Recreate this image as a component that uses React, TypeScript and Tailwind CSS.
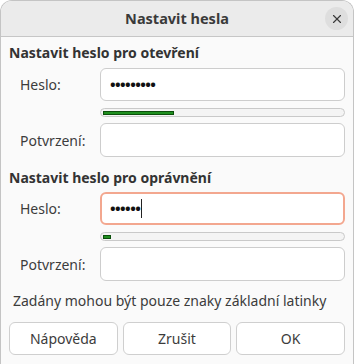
import { X } from "lucide-react";

function PasswordField({ dots, focused }: { dots: number; focused?: boolean }) {
  return (
    <div
      className={
        focused
          ? "h-[33px] rounded-[6px] border-2 border-[#f3a78f] bg-white flex items-center pl-[8px]"
          : "h-[33px] rounded-[6px] border border-[#cdcdcd] bg-white flex items-center pl-[9px]"
      }
    >
      <span className="text-[#111] text-[15px] font-bold tracking-[-0.6px] leading-none">
        {"•".repeat(dots)}
      </span>
      {focused && <span className="ml-[1px] w-px h-[19px] bg-[#222]" />}
    </div>
  );
}

function Strength({ width }: { width: number }) {
  return (
    <div className="h-[9px] rounded-full border border-[#c9c9c9] bg-[#f4f4f4] flex items-center px-[2px]">
      <div
        className="h-[4px] bg-[#1f8f1f] border border-[#0b4f0b]"
        style={{ width }}
      />
    </div>
  );
}

function Row({ label, children }: { label: string; children: React.ReactNode }) {
  return (
    <div className="grid grid-cols-[80px_1fr] items-center pl-[11px]">
      <span className="text-[14px] text-[#3c3c3c]">{label}</span>
      {children}
    </div>
  );
}

export default function App() {
  return (
    <div
      className="w-[354px] h-[364px] bg-white"
      style={{ fontFamily: "'Noto Sans', 'Open Sans', sans-serif" }}
    >
      <div className="h-full flex flex-col rounded-t-[12px] border-x border-t border-[#c4c4c4] bg-[#fafafa] overflow-hidden">
        <div className="h-[36px] shrink-0 bg-[#ebebeb] border-b border-[#c6c6c6] relative flex items-center justify-center">
          <span className="text-[14.5px] font-bold text-[#3a3a3a]">Nastavit hesla</span>
          <div className="absolute right-[5px] top-[6px] w-[23px] h-[23px] rounded-full bg-[#dedede] flex items-center justify-center">
            <X size={14} strokeWidth={2} className="text-[#3a3a3a]" />
          </div>
        </div>

        <div className="flex flex-col px-[8px]">
          <div className="mt-[6px] h-[18px] flex items-center text-[14px] font-bold text-[#333]">
            Nastavit heslo pro otevření
          </div>
          <div className="mt-[7px]">
            <Row label="Heslo:">
              <PasswordField dots={9} />
            </Row>
          </div>
          <div className="mt-[7px] pl-[91px]">
            <Strength width={71} />
          </div>
          <div className="mt-[6px]">
            <Row label="Potvrzení:">
              <div className="h-[34px] rounded-[6px] border border-[#cdcdcd] bg-white" />
            </Row>
          </div>

          <div className="mt-[11px] h-[18px] flex items-center text-[14px] font-bold text-[#333]">
            Nastavit heslo pro oprávnění
          </div>
          <div className="mt-[6px]">
            <Row label="Heslo:">
              <PasswordField dots={6} focused />
            </Row>
          </div>
          <div className="mt-[7px] pl-[91px]">
            <Strength width={8} />
          </div>
          <div className="mt-[6px]">
            <Row label="Potvrzení:">
              <div className="h-[34px] rounded-[6px] border border-[#cdcdcd] bg-white" />
            </Row>
          </div>

          <div className="mt-[10px] h-[18px] flex items-center pl-[4px] text-[14px] text-[#3c3c3c]">
            Zadány mohou být pouze znaky základní latinky
          </div>

          <div className="mt-[13px] grid grid-cols-3 gap-[5px]">
            {["Nápověda", "Zrušit", "OK"].map((t) => (
              <button
                key={t}
                className="h-[33px] rounded-[6px] border border-[#cfcfcf] bg-white text-[14px] text-[#3c3c3c]"
              >
                {t}
              </button>
            ))}
          </div>
        </div>
      </div>
    </div>
  );
}
